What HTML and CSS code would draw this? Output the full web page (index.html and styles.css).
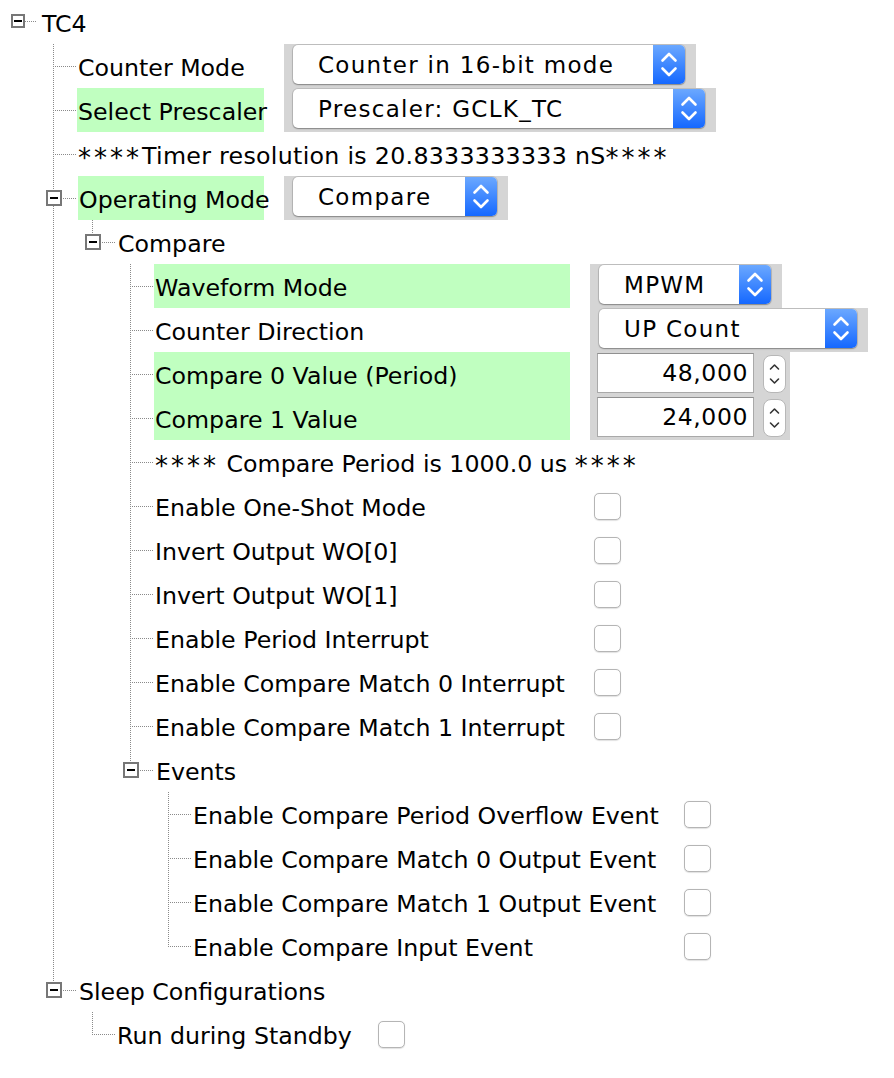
FILE: index.html
```html
<!DOCTYPE html>
<html>
<head>
<meta charset="utf-8">
<title>TC4</title>
<link rel="stylesheet" href="styles.css">
</head>
<body>
<div class="tree">
  <div class="row root">
    <span class="toggle root-toggle"></span>
    <span class="label">TC4</span>
  </div>
  <ul class="branch lv1">
    <li>
      <div class="row">
        <span class="label">Counter Mode</span>
        <div class="well">
          <div class="select w-counter">
            <span class="select-text">Counter in 16-bit mode</span>
            <span class="select-btn"><svg viewBox="0 0 32 39" width="32" height="39"><path d="M9.5 15.5 L16 9 L22.5 15.5 M9.5 23.5 L16 30 L22.5 23.5" fill="none" stroke="#fff" stroke-width="2.6" stroke-linecap="round" stroke-linejoin="round"/></svg></span>
          </div>
        </div>
      </div>
    </li>
    <li>
      <div class="row">
        <span class="label hl">Select Prescaler</span>
        <div class="well">
          <div class="select w-prescaler">
            <span class="select-text">Prescaler: GCLK_TC</span>
            <span class="select-btn"><svg viewBox="0 0 32 39" width="32" height="39"><path d="M9.5 15.5 L16 9 L22.5 15.5 M9.5 23.5 L16 30 L22.5 23.5" fill="none" stroke="#fff" stroke-width="2.6" stroke-linecap="round" stroke-linejoin="round"/></svg></span>
          </div>
        </div>
      </div>
    </li>
    <li>
      <div class="row">
        <span class="label info wide"><span class="stars">****</span>Timer resolution is 20.8333333333 nS<span class="stars">****</span></span>
      </div>
    </li>
    <li>
      <div class="row">
        <span class="toggle"></span>
        <span class="label hl">Operating Mode</span>
        <div class="well">
          <div class="select w-compare">
            <span class="select-text">Compare</span>
            <span class="select-btn"><svg viewBox="0 0 32 39" width="32" height="39"><path d="M9.5 15.5 L16 9 L22.5 15.5 M9.5 23.5 L16 30 L22.5 23.5" fill="none" stroke="#fff" stroke-width="2.6" stroke-linecap="round" stroke-linejoin="round"/></svg></span>
          </div>
        </div>
      </div>
      <ul class="branch lv2">
        <li>
          <div class="row">
            <span class="toggle"></span>
            <span class="label">Compare</span>
          </div>
          <ul class="branch lv3">
            <li>
              <div class="row">
                <span class="label hl">Waveform Mode</span>
                <div class="well">
                  <div class="select w-mpwm">
                    <span class="select-text">MPWM</span>
                    <span class="select-btn"><svg viewBox="0 0 32 39" width="32" height="39"><path d="M9.5 15.5 L16 9 L22.5 15.5 M9.5 23.5 L16 30 L22.5 23.5" fill="none" stroke="#fff" stroke-width="2.6" stroke-linecap="round" stroke-linejoin="round"/></svg></span>
                  </div>
                </div>
              </div>
            </li>
            <li>
              <div class="row">
                <span class="label">Counter Direction</span>
                <div class="well">
                  <div class="select w-dir">
                    <span class="select-text">UP Count</span>
                    <span class="select-btn"><svg viewBox="0 0 32 39" width="32" height="39"><path d="M9.5 15.5 L16 9 L22.5 15.5 M9.5 23.5 L16 30 L22.5 23.5" fill="none" stroke="#fff" stroke-width="2.6" stroke-linecap="round" stroke-linejoin="round"/></svg></span>
                  </div>
                </div>
              </div>
            </li>
            <li>
              <div class="row">
                <span class="label hl">Compare 0 Value (Period)</span>
                <div class="well spin-well">
                  <div class="num">48,000</div>
                  <span class="stepper"><svg viewBox="0 0 21 36" width="21" height="36"><path d="M6.5 13 L10.5 9 L14.5 13 M6.5 23 L10.5 27 L14.5 23" fill="none" stroke="#333" stroke-width="1.6" stroke-linecap="round" stroke-linejoin="round"/></svg></span>
                </div>
              </div>
            </li>
            <li>
              <div class="row">
                <span class="label hl">Compare 1 Value</span>
                <div class="well spin-well">
                  <div class="num">24,000</div>
                  <span class="stepper"><svg viewBox="0 0 21 36" width="21" height="36"><path d="M6.5 13 L10.5 9 L14.5 13 M6.5 23 L10.5 27 L14.5 23" fill="none" stroke="#333" stroke-width="1.6" stroke-linecap="round" stroke-linejoin="round"/></svg></span>
                </div>
              </div>
            </li>
            <li>
              <div class="row">
                <span class="label info"><span class="stars">****</span> Compare Period is 1000.0 us <span class="stars">****</span></span>
              </div>
            </li>
            <li><div class="row"><span class="label">Enable One-Shot Mode</span><span class="check"></span></div></li>
            <li><div class="row"><span class="label">Invert Output WO[0]</span><span class="check"></span></div></li>
            <li><div class="row"><span class="label">Invert Output WO[1]</span><span class="check"></span></div></li>
            <li><div class="row"><span class="label">Enable Period Interrupt</span><span class="check"></span></div></li>
            <li><div class="row"><span class="label">Enable Compare Match 0 Interrupt</span><span class="check"></span></div></li>
            <li><div class="row"><span class="label">Enable Compare Match 1 Interrupt</span><span class="check"></span></div></li>
            <li>
              <div class="row">
                <span class="toggle"></span>
                <span class="label">Events</span>
              </div>
              <ul class="branch lv4">
                <li><div class="row"><span class="label">Enable Compare Period Overflow Event</span><span class="check"></span></div></li>
                <li><div class="row"><span class="label">Enable Compare Match 0 Output Event</span><span class="check"></span></div></li>
                <li><div class="row"><span class="label">Enable Compare Match 1 Output Event</span><span class="check"></span></div></li>
                <li><div class="row"><span class="label">Enable Compare Input Event</span><span class="check"></span></div></li>
              </ul>
            </li>
          </ul>
        </li>
      </ul>
    </li>
    <li>
      <div class="row">
        <span class="toggle"></span>
        <span class="label">Sleep Configurations</span>
      </div>
      <ul class="branch lv2 sleep">
        <li><div class="row"><span class="label">Run during Standby</span><span class="check"></span></div></li>
      </ul>
    </li>
  </ul>
</div>
</body>
</html>
```

FILE: styles.css
```css
* { box-sizing: border-box; }

html, body {
  margin: 0;
  padding: 0;
  background: #ffffff;
}

body {
  font-family: "DejaVu Sans", Verdana, sans-serif;
  font-size: 23.7px;
  color: #000;
}

.tree {
  width: 894px;
}

.branch {
  list-style: none;
  margin: 0;
  padding: 0;
}

.lv1 { margin-left: 53px; }
.lv2 { margin-left: 39px; }
.lv3, .lv4 { margin-left: 38px; }

/* vertical dotted guide */
.branch > li {
  background-image: repeating-linear-gradient(to bottom, #8a8a8a 0 1px, transparent 1px 2px);
  background-repeat: no-repeat;
  background-size: 1px 100%;
  background-position: 0 0;
}

.branch > li:last-child {
  background-size: 1px 23px;
}

/* row with horizontal dotted connector */
.row {
  display: flex;
  align-items: center;
  height: 44px;
  background-image: repeating-linear-gradient(to right, #8a8a8a 0 1px, transparent 1px 2px);
  background-repeat: no-repeat;
  background-size: 23px 1px;
  background-position: 0 22px;
}

.row.root {
  padding-left: 11px;
  background-size: 12px 1px;
  background-position: 25px 21px;
}

.label {
  flex: none;
  display: block;
  height: 44px;
  line-height: 40px;
  padding-top: 4px;
  margin-left: 24px;
  padding-left: 1px;
  white-space: nowrap;
}

.root .label { margin-left: 14px; }

.toggle + .label { margin-left: 16px; }

.label.hl { background: #c0ffc0; }

.stars {
  font-size: 26px;
  letter-spacing: 3px;
  vertical-align: -3px;
  line-height: 1;
}
.label.wide { letter-spacing: 0.3px; }

/* label column widths per group */
.lv1 > li > .row > .label { width: 187px; }
.lv3 > li > .row > .label { width: 416px; }
.lv4 > li > .row > .label { width: 468px; }
.sleep > li > .row > .label { width: 238px; }
.branch > li > .row > .label.info,
.branch > li > .row > .toggle + .label { width: auto; }
.lv1 > li > .row > .toggle + .label.hl { width: 186px; }

/* expander box */
.toggle {
  flex: none;
  width: 16px;
  height: 16px;
  margin-left: -7px;
  border: 2px solid #777;
  background: #fff;
  display: flex;
  align-items: center;
  justify-content: center;
}

.toggle::before {
  content: "";
  width: 8px;
  height: 2px;
  background: #000;
}

.toggle.root-toggle {
  width: 14px;
  height: 14px;
  margin-left: 0;
  margin-top: -3px;
}

/* grey well behind controls */
.well {
  flex: none;
  margin-left: 20px;
  height: 44px;
  background: #d5d5d5;
  padding: 1px 11px 0 9px;
}

.select {
  height: 39px;
  background: #fff;
  border-radius: 5px;
  display: flex;
  align-items: center;
  box-shadow: 0 0 0 1px rgba(0, 0, 0, 0.1), 0 1px 1.5px rgba(0, 0, 0, 0.3);
}

.w-counter { width: 392px; }
.w-prescaler { width: 412px; }
.w-compare { width: 204px; }
.w-mpwm { width: 172px; }
.w-dir { width: 258px; }

.select-text {
  flex: 1;
  padding-left: 25px;
  font-size: 23px;
  letter-spacing: 1.3px;
  white-space: nowrap;
}

.select-btn {
  flex: none;
  width: 32px;
  height: 39px;
  border-radius: 0 5px 5px 0;
  background: linear-gradient(to bottom, #6ba8ff, #1568ff);
}

.select-btn svg { display: block; }

/* numeric spinner */
.spin-well {
  display: flex;
  align-items: flex-start;
  gap: 9px;
  padding: 1px 4px 0 7px;
}

.num {
  width: 157px;
  height: 40px;
  background: #fff;
  border: 1px solid #a9a9a9;
  border-top-color: #909090;
  text-align: right;
  padding-right: 5px;
  font-size: 23.5px;
  line-height: 39px;
  letter-spacing: 0.6px;
}

.stepper {
  display: block;
  width: 23px;
  height: 38px;
  margin-top: 2px;
  background: #fff;
  border: 1px solid #b7b7b7;
  border-radius: 8px;
}

.stepper svg { display: block; }

/* checkbox */
.check {
  flex: none;
  width: 27px;
  height: 27px;
  margin-left: 24px;
  background: #fff;
  border: 1px solid #b5b5b5;
  border-radius: 5px;
  box-shadow: 0 0.5px 1px rgba(0, 0, 0, 0.12);
}
```
